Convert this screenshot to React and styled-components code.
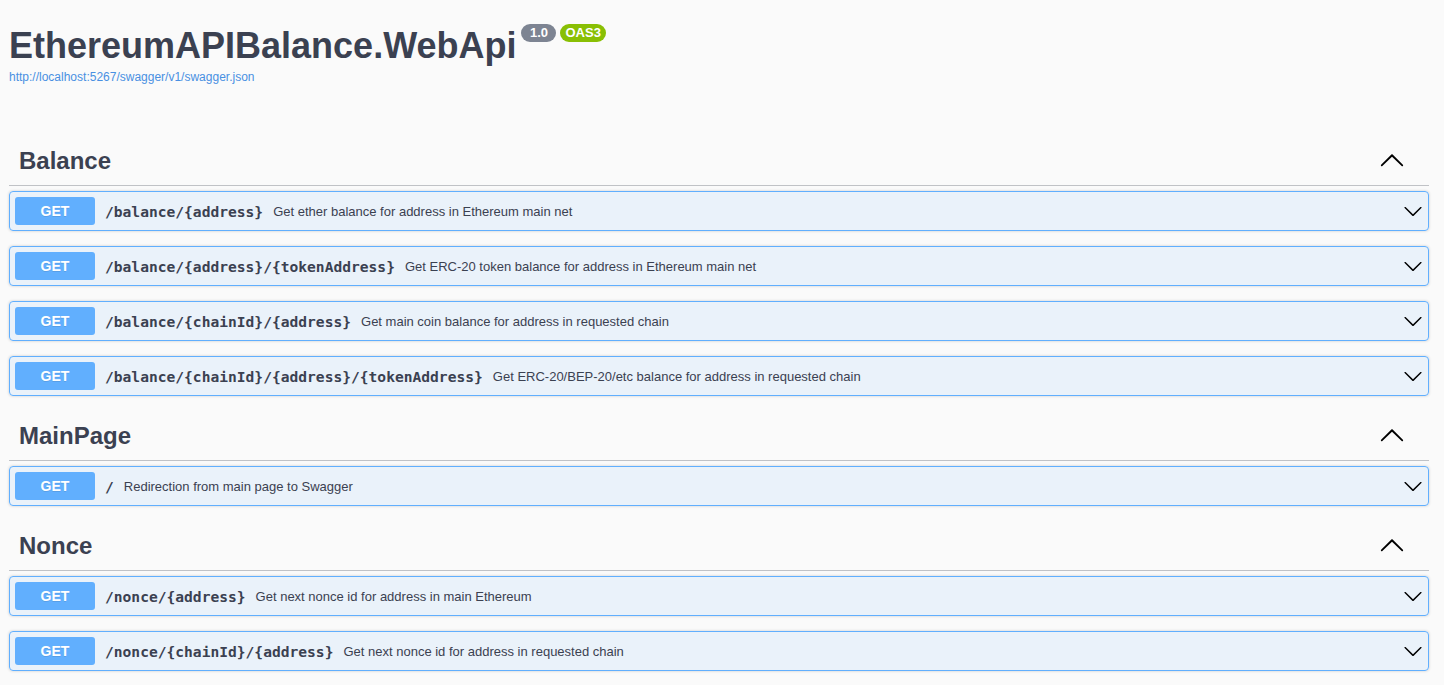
import React from "react";
import styled, { createGlobalStyle } from "styled-components";

const GlobalStyle = createGlobalStyle`
  html, body {
    margin: 0;
    padding: 0;
    background: #fafafa;
    overflow: hidden;
  }
  body {
    font-family: "Liberation Sans", Arial, sans-serif;
    color: #3b4151;
  }
`;

const Wrapper = styled.div`
  padding: 25px 15px 0 9px;
`;

const Info = styled.div`
  margin-bottom: 52px;
`;

const TitleRow = styled.div`
  display: flex;
  align-items: flex-start;
`;

const Title = styled.h2`
  margin: 0;
  font-size: 36px;
  line-height: 41px;
  font-weight: bold;
  color: #3b4151;
`;

const Badges = styled.div`
  display: flex;
  gap: 4px;
  margin-left: 5px;
  margin-top: -1px;
`;

const Badge = styled.span`
  display: inline-block;
  min-width: 35px;
  box-sizing: border-box;
  padding: 2px 5px;
  border-radius: 57px;
  background: ${(p) => p.$bg};
  color: #fff;
  font-size: 13px;
  line-height: 14px;
  font-weight: bold;
  text-align: center;
`;

const SpecLink = styled.a`
  display: block;
  margin-top: 4px;
  font-size: 12px;
  line-height: 14px;
  color: #4990e2;
  text-decoration: none;
`;

const TagSection = styled.section``;

const TagHeader = styled.div`
  display: flex;
  align-items: center;
  height: 50px;
  box-sizing: border-box;
  padding: 0 24px 0 10px;
  border-bottom: 1px solid rgba(59, 65, 81, 0.3);
  margin-bottom: 5px;
`;

const TagName = styled.h3`
  flex: 1;
  margin: 0;
  font-size: 24px;
  font-weight: bold;
  color: #3b4151;
`;

const OpBlock = styled.div`
  display: flex;
  align-items: center;
  padding: 5px;
  margin-bottom: 15px;
  border: 1px solid #61affe;
  border-radius: 4px;
  background: rgba(97, 175, 254, 0.1);
  box-shadow: 0 0 3px rgba(0, 0, 0, 0.19);
`;

const Method = styled.span`
  min-width: 80px;
  padding: 6px 0;
  border-radius: 3px;
  background: #61affe;
  color: #fff;
  font-size: 14px;
  line-height: 16px;
  font-weight: bold;
  text-align: center;
  text-shadow: 0 1px 0 rgba(0, 0, 0, 0.1);
`;

const Path = styled.span`
  padding: 0 10px;
  font-family: "DejaVu Sans Mono", monospace;
  font-size: 14.6px;
  font-weight: bold;
  color: #3b4151;
`;

const Desc = styled.span`
  flex: 1;
  font-size: 13px;
  color: #3b4151;
`;

const ArrowSvg = styled.svg`
  flex: none;
  transform: ${(p) => (p.$up ? "rotate(180deg)" : "none")};
`;

const Arrow = ({ up, size }) => (
  <ArrowSvg $up={up} width={size} height={size} viewBox="0 0 20 20">
    <path
      fill="#000"
      d="M17.418 6.109c.272-.268.709-.268.979 0s.271.701 0 .969l-7.908 7.83c-.27.268-.707.268-.979 0l-7.908-7.83c-.27-.268-.27-.701 0-.969.271-.268.709-.268.979 0L10 13.25l7.418-7.141z"
    />
  </ArrowSvg>
);

const tags = [
  {
    name: "Balance",
    ops: [
      ["/balance/{address}", "Get ether balance for address in Ethereum main net"],
      ["/balance/{address}/{tokenAddress}", "Get ERC-20 token balance for address in Ethereum main net"],
      ["/balance/{chainId}/{address}", "Get main coin balance for address in requested chain"],
      ["/balance/{chainId}/{address}/{tokenAddress}", "Get ERC-20/BEP-20/etc balance for address in requested chain"],
    ],
  },
  {
    name: "MainPage",
    ops: [["/", "Redirection from main page to Swagger"]],
  },
  {
    name: "Nonce",
    ops: [
      ["/nonce/{address}", "Get next nonce id for address in main Ethereum"],
      ["/nonce/{chainId}/{address}", "Get next nonce id for address in requested chain"],
    ],
  },
];

export default function App() {
  return (
    <>
      <GlobalStyle />
      <Wrapper>
        <Info>
          <TitleRow>
            <Title>EthereumAPIBalance.WebApi</Title>
            <Badges>
              <Badge $bg="#7d8492">1.0</Badge>
              <Badge $bg="#89bf04">OAS3</Badge>
            </Badges>
          </TitleRow>
          <SpecLink href="#">http://localhost:5267/swagger/v1/swagger.json</SpecLink>
        </Info>

        {tags.map((tag) => (
          <TagSection key={tag.name}>
            <TagHeader>
              <TagName>{tag.name}</TagName>
              <Arrow up size={26} />
            </TagHeader>
            {tag.ops.map(([path, desc]) => (
              <OpBlock key={path}>
                <Method>GET</Method>
                <Path>{path}</Path>
                <Desc>{desc}</Desc>
                <Arrow size={20} />
              </OpBlock>
            ))}
          </TagSection>
        ))}
      </Wrapper>
    </>
  );
}
